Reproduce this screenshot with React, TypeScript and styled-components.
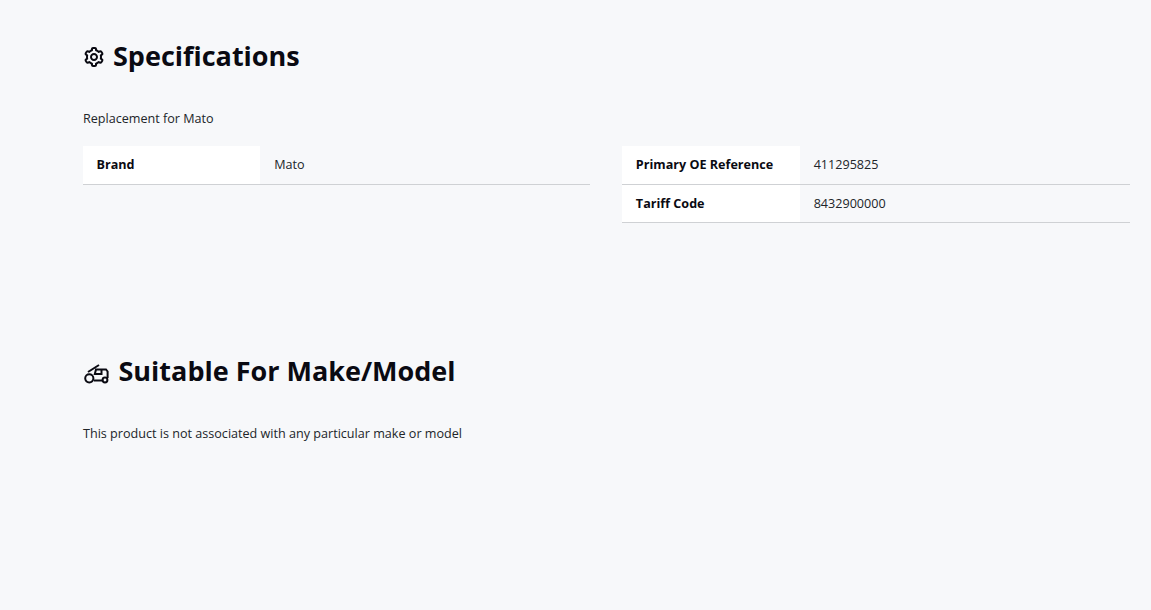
import { createGlobalStyle, styled } from "styled-components";
import { BiCog } from "react-icons/bi";

const GlobalStyle = createGlobalStyle`
	html, body {
		margin: 0;
		padding: 0;
		background: #f7f8fa;
		color: #0a0a0a;
		font-family: "Open Sans", "Liberation Sans", sans-serif;
	}
`;

const Page = styled.div`
	display: flex;
	flex-direction: column;
	height: 610px;
	padding: 0 21.3px 0 83px;
	overflow: hidden;
`;

const Section = styled.section<{ $height: number; $top: number }>`
	height: ${(p) => p.$height}px;
	padding-top: ${(p) => p.$top}px;
	box-sizing: border-box;
`;

const Heading = styled.h2<{ $gap: number }>`
	display: flex;
	align-items: center;
	gap: ${(p) => p.$gap}px;
	margin: 0 0 35px;
	height: 38px;
	font-size: 27px;
	line-height: 38px;
	font-weight: 700;
	color: #0a0a12;
`;

const IconWrap = styled.span`
	display: flex;
	margin-top: 2px;
`;

const GearWrap = styled(IconWrap)`
	margin-left: -1px;
`;

const Note = styled.p`
	margin: 0 0 18px;
	height: 18px;
	font-size: 12.6px;
	line-height: 18px;
	color: #212529;
`;

const Columns = styled.div`
	display: grid;
	grid-template-columns: 1fr 1fr;
	gap: 32px;
	align-items: start;
`;

const Table = styled.div`
	display: flex;
	flex-direction: column;
`;

const Row = styled.div`
	display: grid;
	grid-template-columns: 177.3px 1fr;
	height: 37.5px;
	border-bottom: 1px solid #cfd1d4;
`;

const Label = styled.div`
	display: flex;
	align-items: center;
	padding-left: 13.5px;
	background: #fff;
	font-size: 12.6px;
	font-weight: 700;
	color: #0a0a12;
`;

const Value = styled.div`
	display: flex;
	align-items: center;
	padding-left: 14px;
	font-size: 12.6px;
	color: #212529;
`;

const TractorIcon = () => (
	<svg width="27.5" height="24" viewBox="0 0 27.5 24" fill="none" stroke="#0a0a12" strokeWidth="2">
		<circle cx="6.3" cy="18.3" r="4.1" />
		<circle cx="22" cy="20" r="2.4" />
		<path d="M11 20.5h8.5M24.6 18V11.5L23 9.5H13L11.8 14H18.5V9.5M5 12L16 5" />
	</svg>
);

const App = () => {
	return (
		<>
			<GlobalStyle />
			<Page>
				<Section $height={315} $top={37}>
					<Heading $gap={7}>
						<GearWrap>
							<BiCog size={24} />
						</GearWrap>
						Specifications
					</Heading>
					<Note>Replacement for Mato</Note>
					<Columns>
						<Table>
							<Row>
								<Label>Brand</Label>
								<Value>Mato</Value>
							</Row>
						</Table>
						<Table>
							<Row>
								<Label>Primary OE Reference</Label>
								<Value>411295825</Value>
							</Row>
							<Row>
								<Label>Tariff Code</Label>
								<Value>8432900000</Value>
							</Row>
						</Table>
					</Columns>
				</Section>
				<Section $height={295} $top={37}>
					<Heading $gap={8}>
						<IconWrap>
							<TractorIcon />
						</IconWrap>
						Suitable For Make/Model
					</Heading>
					<Note>This product is not associated with any particular make or model</Note>
				</Section>
			</Page>
		</>
	);
};

export default App;
